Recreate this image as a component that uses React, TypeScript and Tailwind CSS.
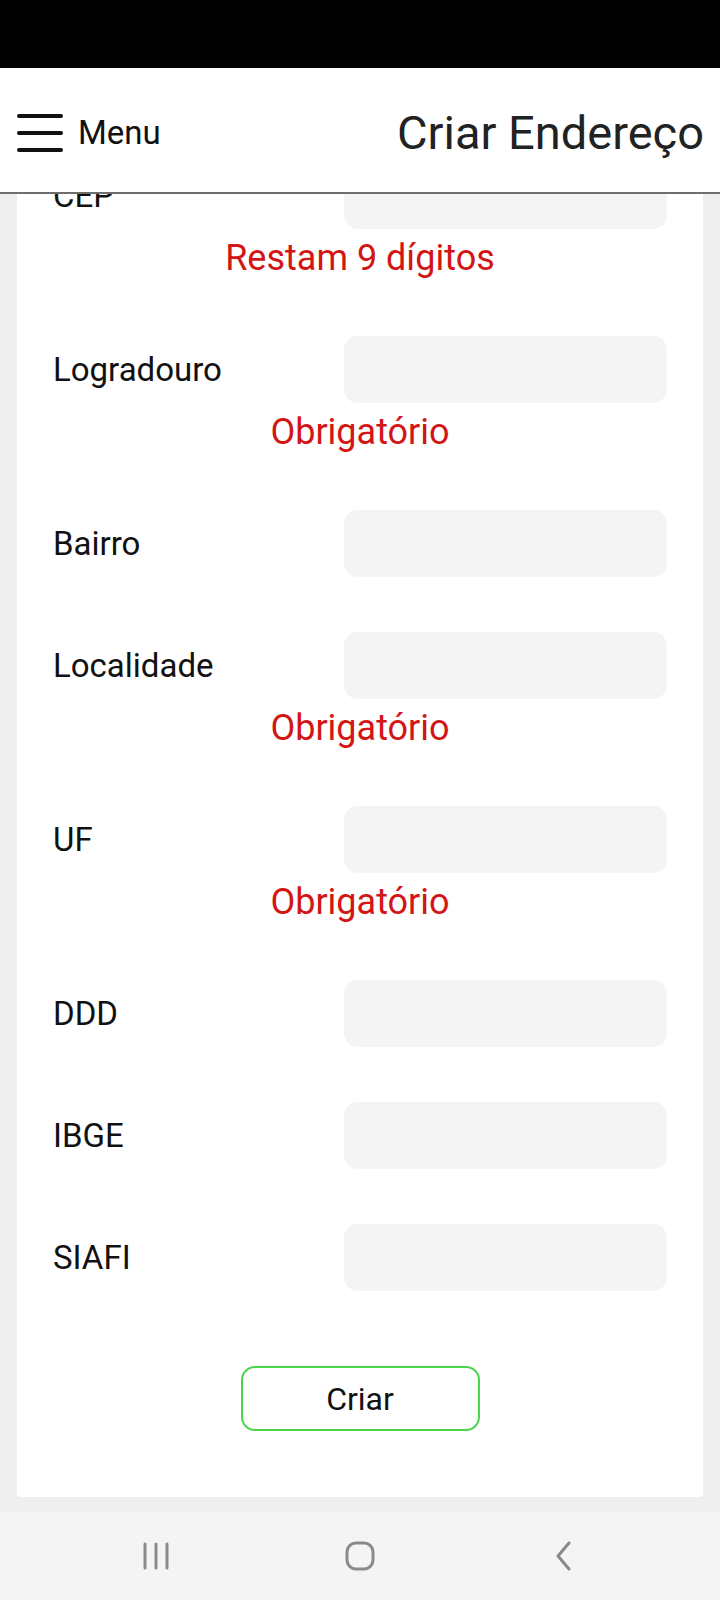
import type { ReactNode } from "react";

interface FieldProps {
  label: string;
  error?: string;
}

const Field = ({ label, error }: FieldProps) => {
  return (
    <div className="mb-[55px]">
      <div className="flex h-[67px] items-center">
        <span className="w-[291px] text-[33px] text-[#111]">{label}</span>
        <div className="h-[67px] flex-1 rounded-[14px] bg-[#f4f4f4]" />
      </div>
      {error && (
        <div className="h-[52px] pt-[8px] text-center text-[36px] leading-[42px] text-[#d31515]">
          {error}
        </div>
      )}
    </div>
  );
};

const NavIcon = ({ children }: { children: ReactNode }) => (
  <div className="flex h-[30px] w-[30px] items-center justify-center">{children}</div>
);

export default function App() {
  return (
    <div className="flex h-[1600px] w-[720px] flex-col overflow-hidden bg-[#efefef] font-['Roboto',sans-serif]">
      <div className="h-[68px] shrink-0 bg-black" />

      <header className="flex h-[126px] shrink-0 items-center justify-between border-b-2 border-[#6e6e6e] bg-white pl-[17px] pr-[16px] pt-[6px]">
        <div className="flex items-center gap-[15px]">
          <svg width="46" height="40" viewBox="0 0 46 40">
            <g stroke="#111" strokeWidth="4" strokeLinecap="round">
              <line x1="2" y1="3" x2="44" y2="3" />
              <line x1="2" y1="20" x2="44" y2="20" />
              <line x1="2" y1="37" x2="44" y2="37" />
            </g>
          </svg>
          <span className="text-[33px] text-[#111]">Menu</span>
        </div>
        <h1 className="text-[47px] text-[#222]">Criar Endereço</h1>
      </header>

      <main className="flex-1 overflow-hidden px-[17px]">
        <div className="-mt-[32px] rounded-[4px] bg-white px-[36px] pb-[66px]">
          <Field label="CEP" error="Restam 9 dígitos" />
          <Field label="Logradouro" error="Obrigatório" />
          <Field label="Bairro" />
          <Field label="Localidade" error="Obrigatório" />
          <Field label="UF" error="Obrigatório" />
          <Field label="DDD" />
          <Field label="IBGE" />
          <Field label="SIAFI" />
          <div className="flex justify-center pt-[20px]">
            <button className="h-[65px] w-[239px] rounded-[14px] border-2 border-[#4cd44c] bg-white text-[32px] text-[#111]">
              Criar
            </button>
          </div>
        </div>
      </main>

      <nav className="flex h-[88px] shrink-0 items-center justify-between bg-[#f4f4f4] px-[141px]">
        <NavIcon>
          <svg width="28" height="28" viewBox="0 0 28 28">
            <g stroke="#8a8a8a" strokeWidth="3" strokeLinecap="round">
              <line x1="3" y1="2" x2="3" y2="26" />
              <line x1="14" y1="2" x2="14" y2="26" />
              <line x1="25" y1="2" x2="25" y2="26" />
            </g>
          </svg>
        </NavIcon>
        <NavIcon>
          <svg width="30" height="30" viewBox="0 0 30 30">
            <rect x="2" y="2" width="26" height="26" rx="9" fill="none" stroke="#8a8a8a" strokeWidth="3" />
          </svg>
        </NavIcon>
        <NavIcon>
          <svg width="20" height="30" viewBox="0 0 20 30">
            <polyline points="15,2 4,15 15,28" fill="none" stroke="#8a8a8a" strokeWidth="3" strokeLinecap="round" strokeLinejoin="round" />
          </svg>
        </NavIcon>
      </nav>
    </div>
  );
}
